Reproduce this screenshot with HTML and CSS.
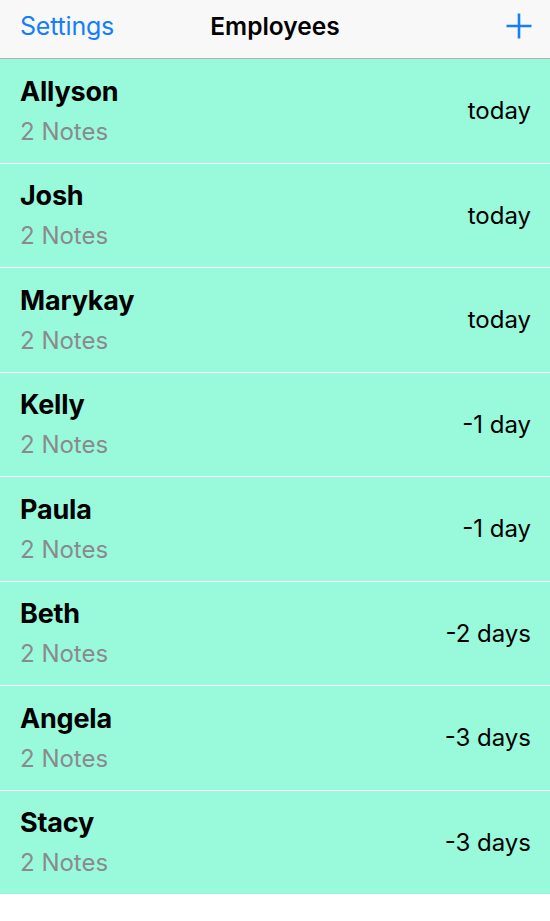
FILE: index.html
```html
<!DOCTYPE html>
<html lang="en">
<head>
  <meta charset="UTF-8">
  <title>Employees</title>
  <link rel="stylesheet" href="styles.css">
</head>
<body>
  <header class="navbar">
    <a class="nav-left">Settings</a>
    <h1 class="nav-title">Employees</h1>
    <a class="nav-add" aria-label="Add">
      <svg width="28" height="28" viewBox="0 0 28 28">
        <path d="M14 1.5V26.5M1.5 14H26.5" stroke="#147efb" stroke-width="2.6" fill="none"/>
      </svg>
    </a>
  </header>

  <ul class="list">
    <li class="row"><div class="info"><span class="name">Allyson</span><span class="notes">2 Notes</span></div><span class="when">today</span></li>
    <li class="row"><div class="info"><span class="name">Josh</span><span class="notes">2 Notes</span></div><span class="when">today</span></li>
    <li class="row"><div class="info"><span class="name">Marykay</span><span class="notes">2 Notes</span></div><span class="when">today</span></li>
    <li class="row"><div class="info"><span class="name">Kelly</span><span class="notes">2 Notes</span></div><span class="when">-1 day</span></li>
    <li class="row"><div class="info"><span class="name">Paula</span><span class="notes">2 Notes</span></div><span class="when">-1 day</span></li>
    <li class="row"><div class="info"><span class="name">Beth</span><span class="notes">2 Notes</span></div><span class="when">-2 days</span></li>
    <li class="row"><div class="info"><span class="name">Angela</span><span class="notes">2 Notes</span></div><span class="when">-3 days</span></li>
    <li class="row"><div class="info"><span class="name">Stacy</span><span class="notes">2 Notes</span></div><span class="when">-3 days</span></li>
  </ul>
</body>
</html>
```

FILE: styles.css
```css
body {
  margin: 0;
  background: #fff;
  font-family: Inter, "Liberation Sans", sans-serif;
  width: 550px;
}
.navbar {
  height: 59px;
  background: #f8f8f8;
  border-bottom: 1px solid #b2b2b2;
  box-sizing: border-box;
  display: flex;
  align-items: center;
  justify-content: space-between;
  padding: 0 17px 7px 20px;
  position: relative;
}
.nav-left {
  color: #147efb;
  font-size: 25px;
  letter-spacing: -0.2px;
}
.nav-title {
  position: absolute;
  left: 0;
  right: 0;
  top: 0;
  bottom: 7px;
  display: flex;
  align-items: center;
  justify-content: center;
  margin: 0;
  font-size: 24.5px;
  font-weight: 600;
  color: #000;
  pointer-events: none;
}
.nav-add {
  display: flex;
  margin-top: 1px;
}
.list {
  list-style: none;
  margin: 0;
  padding: 0;
}
.row {
  height: 104.5px;
  box-sizing: border-box;
  background: #99fadb;
  border-bottom: 1.5px solid #fff;
  display: flex;
  align-items: center;
  justify-content: space-between;
  padding: 0 19px 0 20px;
}
.row:last-child {
  border-bottom: none;
  height: 103px;
}
.info {
  display: flex;
  flex-direction: column;
  margin-top: 3px;
}
.name {
  font-size: 27px;
  font-weight: 700;
  color: #000;
  line-height: 34px;
  letter-spacing: -0.2px;
}
.notes {
  font-size: 24px;
  color: #8a8a8e;
  line-height: 36px;
  margin-top: 5px;
}
.when {
  font-size: 24px;
  color: #000;
}
```
